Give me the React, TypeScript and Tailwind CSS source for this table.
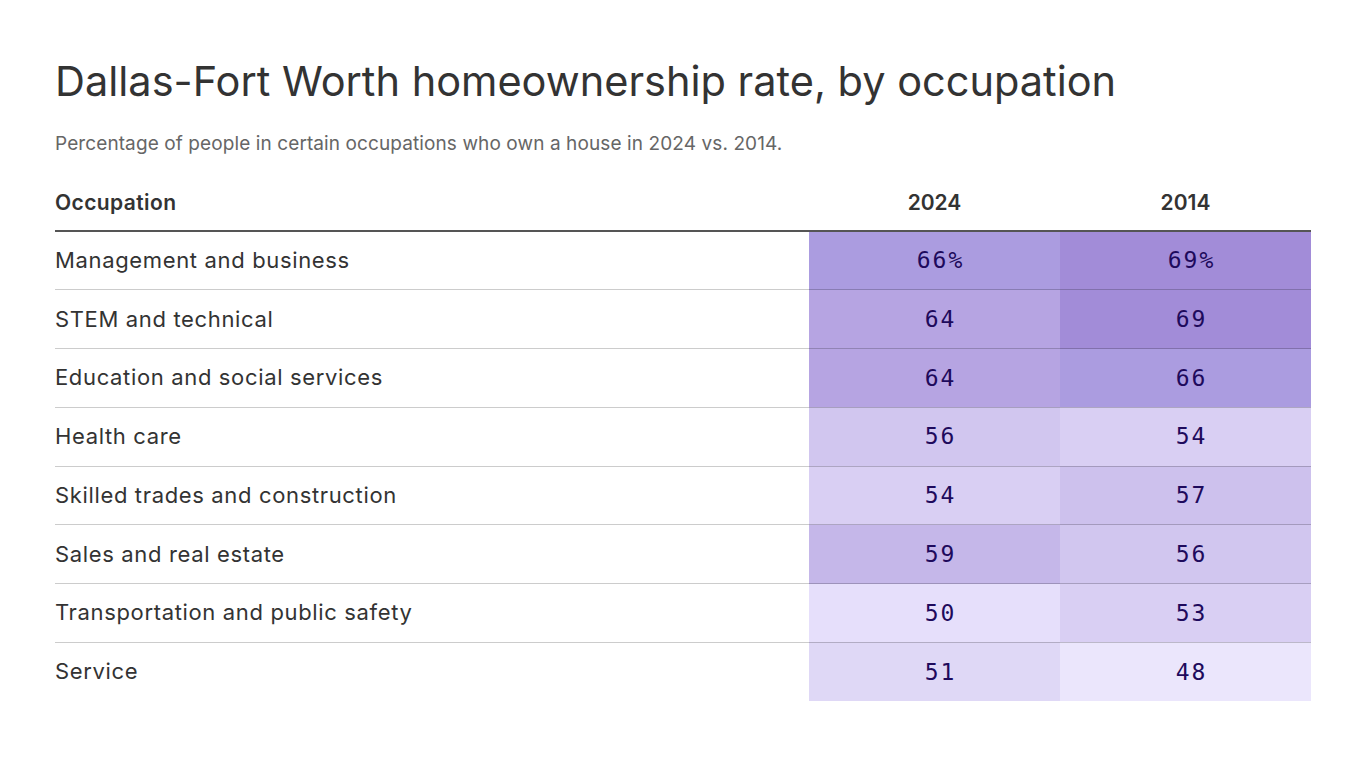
const rows = [
  { name: 'Management and business', a: '66%', b: '69%', ca: 'bg-[#ab9ce0]', cb: 'bg-[#a28cd8]' },
  { name: 'STEM and technical', a: '64', b: '69', ca: 'bg-[#b6a4e2]', cb: 'bg-[#a28cd8]' },
  { name: 'Education and social services', a: '64', b: '66', ca: 'bg-[#b6a4e2]', cb: 'bg-[#ab9ce0]' },
  { name: 'Health care', a: '56', b: '54', ca: 'bg-[#d1c6ef]', cb: 'bg-[#d9cff3]' },
  { name: 'Skilled trades and construction', a: '54', b: '57', ca: 'bg-[#d9cff3]', cb: 'bg-[#cdc1ed]' },
  { name: 'Sales and real estate', a: '59', b: '56', ca: 'bg-[#c5b7e9]', cb: 'bg-[#d1c6ef]' },
  { name: 'Transportation and public safety', a: '50', b: '53', ca: 'bg-[#e6dffb]', cb: 'bg-[#d9cff3]' },
  { name: 'Service', a: '51', b: '48', ca: 'bg-[#dfd8f6]', cb: 'bg-[#ebe6fc]' },
]

export default function App() {
  return (
    <div className="min-h-screen bg-white px-[55px] pt-[56px] font-['Inter','Liberation_Sans',sans-serif] text-[#333]">
      <h1 className="text-[41.5px] leading-[50px] text-[#333]">
        Dallas-Fort Worth homeownership rate, by occupation
      </h1>
      <p className="mt-[26px] text-[19px] leading-[24px] tracking-[0.1px] text-[#666]">
        Percentage of people in certain occupations who own a house in 2024 vs. 2014.
      </p>

      {/* Table */}
      <table className="mt-[27px] w-[1256px] border-collapse">
        <thead>
          <tr className="border-b-2 border-[#555]">
            <th className="h-[48px] pb-[7px] text-left text-[21px] font-semibold tracking-[0.4px]">
              Occupation
            </th>
            <th className="w-[251px] pb-[7px] text-center text-[21px] font-semibold">2024</th>
            <th className="w-[251px] pb-[7px] text-center text-[21px] font-semibold">2014</th>
          </tr>
        </thead>
        <tbody>
          {rows.map((r, i) => (
            <tr
              key={r.name}
              className={i < rows.length - 1 ? 'border-b border-black/20' : ''}
            >
              <td className="h-[58.75px] text-left text-[22px] tracking-[0.65px]">{r.name}</td>
              <td className={`${r.ca} pl-[12px] text-center font-['DejaVu_Sans_Mono',monospace] text-[23px] tracking-[2px] text-[#1e0a5c]`}>
                {r.a}
              </td>
              <td className={`${r.cb} pl-[12px] text-center font-['DejaVu_Sans_Mono',monospace] text-[23px] tracking-[2px] text-[#1e0a5c]`}>
                {r.b}
              </td>
            </tr>
          ))}
        </tbody>
      </table>
    </div>
  )
}
